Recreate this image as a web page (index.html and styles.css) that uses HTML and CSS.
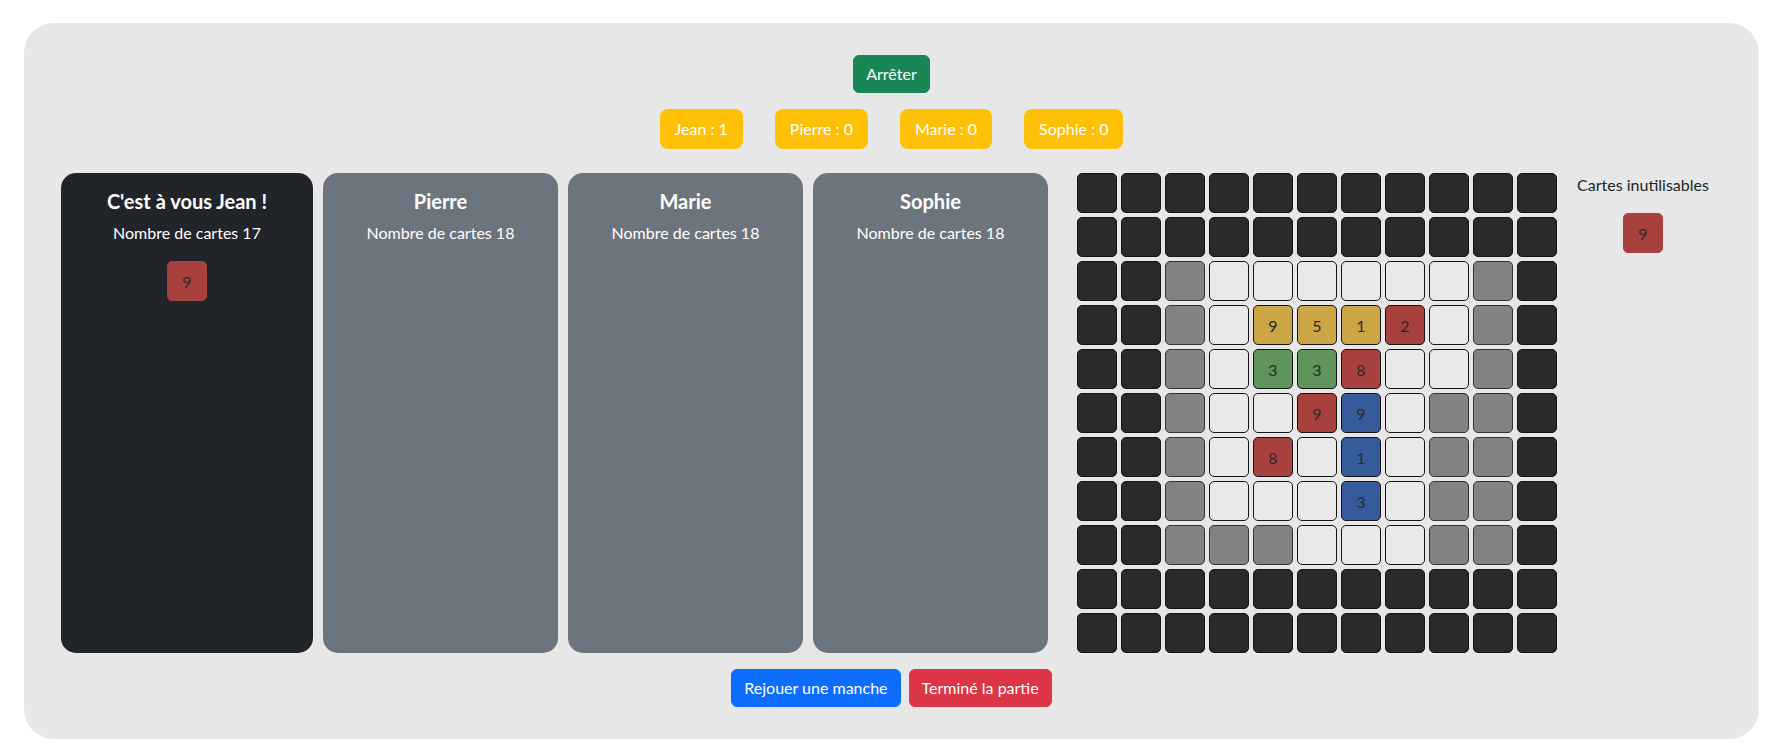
FILE: index.html
```html
<!DOCTYPE html>
<html lang="fr">
<head>
<meta charset="utf-8">
<title>Jeu</title>
<link rel="stylesheet" href="styles.css">
</head>
<body>
<div class="page">
  <div class="board">
    <div class="top">
      <button class="btn btn-success">Arrêter</button>
    </div>
    <div class="scores">
      <span class="score">Jean : 1</span>
      <span class="score">Pierre : 0</span>
      <span class="score">Marie : 0</span>
      <span class="score">Sophie : 0</span>
    </div>
    <div class="main">
      <div class="players">
        <div class="player active">
          <h5 class="player-title">C'est à vous Jean !</h5>
          <p class="player-count">Nombre de cartes 17</p>
          <div class="hand"><div class="tile red">9</div></div>
        </div>
        <div class="player">
          <h5 class="player-title">Pierre</h5>
          <p class="player-count">Nombre de cartes 18</p>
        </div>
        <div class="player">
          <h5 class="player-title">Marie</h5>
          <p class="player-count">Nombre de cartes 18</p>
        </div>
        <div class="player">
          <h5 class="player-title">Sophie</h5>
          <p class="player-count">Nombre de cartes 18</p>
        </div>
      </div>
      <div class="grid">
        <div class="tile dark"></div><div class="tile dark"></div><div class="tile dark"></div><div class="tile dark"></div><div class="tile dark"></div><div class="tile dark"></div><div class="tile dark"></div><div class="tile dark"></div><div class="tile dark"></div><div class="tile dark"></div><div class="tile dark"></div>
        <div class="tile dark"></div><div class="tile dark"></div><div class="tile dark"></div><div class="tile dark"></div><div class="tile dark"></div><div class="tile dark"></div><div class="tile dark"></div><div class="tile dark"></div><div class="tile dark"></div><div class="tile dark"></div><div class="tile dark"></div>
        <div class="tile dark"></div><div class="tile dark"></div><div class="tile gray"></div><div class="tile light"></div><div class="tile light"></div><div class="tile light"></div><div class="tile light"></div><div class="tile light"></div><div class="tile light"></div><div class="tile gray"></div><div class="tile dark"></div>
        <div class="tile dark"></div><div class="tile dark"></div><div class="tile gray"></div><div class="tile light"></div><div class="tile yellow">9</div><div class="tile yellow">5</div><div class="tile yellow">1</div><div class="tile red">2</div><div class="tile light"></div><div class="tile gray"></div><div class="tile dark"></div>
        <div class="tile dark"></div><div class="tile dark"></div><div class="tile gray"></div><div class="tile light"></div><div class="tile green">3</div><div class="tile green">3</div><div class="tile red">8</div><div class="tile light"></div><div class="tile light"></div><div class="tile gray"></div><div class="tile dark"></div>
        <div class="tile dark"></div><div class="tile dark"></div><div class="tile gray"></div><div class="tile light"></div><div class="tile light"></div><div class="tile red">9</div><div class="tile blue">9</div><div class="tile light"></div><div class="tile gray"></div><div class="tile gray"></div><div class="tile dark"></div>
        <div class="tile dark"></div><div class="tile dark"></div><div class="tile gray"></div><div class="tile light"></div><div class="tile red">8</div><div class="tile light"></div><div class="tile blue">1</div><div class="tile light"></div><div class="tile gray"></div><div class="tile gray"></div><div class="tile dark"></div>
        <div class="tile dark"></div><div class="tile dark"></div><div class="tile gray"></div><div class="tile light"></div><div class="tile light"></div><div class="tile light"></div><div class="tile blue">3</div><div class="tile light"></div><div class="tile gray"></div><div class="tile gray"></div><div class="tile dark"></div>
        <div class="tile dark"></div><div class="tile dark"></div><div class="tile gray"></div><div class="tile gray"></div><div class="tile gray"></div><div class="tile light"></div><div class="tile light"></div><div class="tile light"></div><div class="tile gray"></div><div class="tile gray"></div><div class="tile dark"></div>
        <div class="tile dark"></div><div class="tile dark"></div><div class="tile dark"></div><div class="tile dark"></div><div class="tile dark"></div><div class="tile dark"></div><div class="tile dark"></div><div class="tile dark"></div><div class="tile dark"></div><div class="tile dark"></div><div class="tile dark"></div>
        <div class="tile dark"></div><div class="tile dark"></div><div class="tile dark"></div><div class="tile dark"></div><div class="tile dark"></div><div class="tile dark"></div><div class="tile dark"></div><div class="tile dark"></div><div class="tile dark"></div><div class="tile dark"></div><div class="tile dark"></div>
      </div>
      <div class="discard">
        <p class="discard-title">Cartes inutilisables</p>
        <div class="tile red">9</div>
      </div>
    </div>
    <div class="actions">
      <button class="btn btn-primary">Rejouer une manche</button>
      <button class="btn btn-danger">Terminé la partie</button>
    </div>
  </div>
</div>
</body>
</html>
```

FILE: styles.css
```css
* { box-sizing: border-box; }

html, body {
  margin: 0;
  padding: 0;
  background: #ffffff;
}

body {
  font-family: Lato, "Open Sans", "Liberation Sans", sans-serif;
  font-size: 16px;
  line-height: 1.5;
  color: #212529;
}

.page {
  padding: 23px 18px 12px 24px;
}

.board {
  background: #e7e7e7;
  border-radius: 30px;
  height: 716px;
  padding: 32px 0 0 0;
  display: flex;
  flex-direction: column;
  align-items: stretch;
}

.top {
  display: flex;
  justify-content: center;
}

.btn {
  font-family: inherit;
  font-size: 16px;
  line-height: 24px;
  padding: 6px 12px;
  border: 1px solid transparent;
  border-radius: 6px;
  color: #ffffff;
  cursor: pointer;
}

.btn-success { background: #198754; border-color: #198754; }
.btn-primary { background: #0d6efd; border-color: #0d6efd; }
.btn-danger { background: #dc3545; border-color: #dc3545; }

.scores {
  display: flex;
  justify-content: center;
  gap: 32px;
  margin-top: 16px;
}

.score {
  background: #ffc107;
  color: #ffffff;
  border-radius: 8px;
  height: 40px;
  line-height: 40px;
  padding: 0 15px;
  font-size: 16px;
}

.main {
  display: flex;
  margin-top: 24px;
  padding-left: 37px;
  height: 480px;
}

.players {
  display: flex;
  gap: 10px;
}

.player {
  width: 235px;
  height: 480px;
  background: #6c757d;
  border-radius: 15px;
  padding: 16px;
  color: #ffffff;
  text-align: center;
}

.player.active {
  width: 252px;
  background: #212529;
}

.player-title {
  margin: 0 0 8px 0;
  font-size: 20px;
  line-height: 24px;
  font-weight: 700;
}

.player-count {
  margin: 0 0 16px 0;
  font-size: 16px;
  line-height: 24px;
}

.hand {
  display: flex;
  justify-content: center;
}

.grid {
  margin-left: 29px;
  display: grid;
  grid-template-columns: repeat(11, 40px);
  grid-auto-rows: 40px;
  gap: 4px;
  align-content: start;
}

.tile {
  width: 40px;
  height: 40px;
  border: 1px solid #151515;
  border-radius: 5px;
  display: flex;
  align-items: center;
  justify-content: center;
  font-size: 16px;
  color: #2b2b2b;
  padding-top: 2px;
}

.tile.dark { background: #2a2a2a; }
.tile.gray { background: #828282; border-color: #333333; }
.tile.light { background: #e9e9e9; }
.tile.yellow { background: #cca645; }
.tile.green { background: #5f945a; }
.tile.red { background: #a8403d; border-color: #a8403d; }
.grid .tile.red { border-color: #151515; }
.tile.blue { background: #355b9b; }

.discard {
  width: 152px;
  margin-left: 10px;
  display: flex;
  flex-direction: column;
  align-items: center;
  padding-top: 0;
}

.discard-title {
  margin: 0 0 16px 0;
  font-size: 16px;
  line-height: 24px;
  color: #212529;
}

.actions {
  display: flex;
  justify-content: center;
  gap: 8px;
  margin-top: 16px;
}
```
